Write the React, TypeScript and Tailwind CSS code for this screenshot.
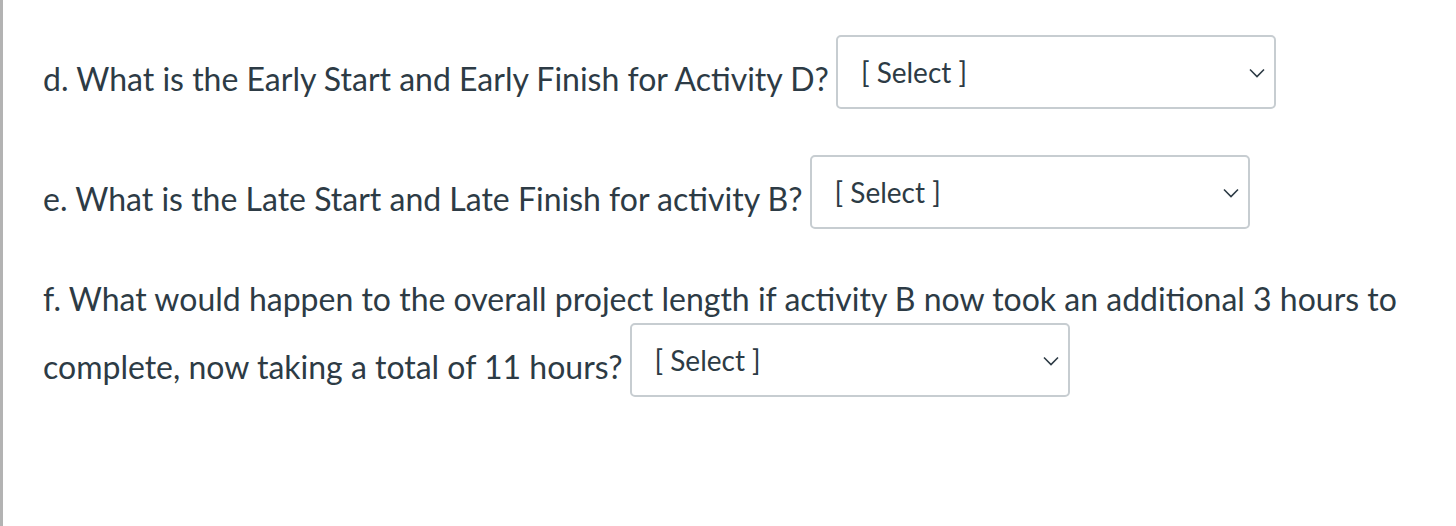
function SelectBox() {
  return (
    <div className="flex h-[74px] w-[440px] shrink-0 items-center justify-between rounded-[5px] border-2 border-[#c7cdd1] bg-white pl-[23px] pr-[9px]">
      <span className="text-[28px] text-[#2d3b45]">[ Select ]</span>
      <svg width="16" height="10" viewBox="0 0 16 10" fill="none" className="mt-[2px]">
        <polyline points="1,1.5 8,8.5 15,1.5" stroke="#2d3b45" strokeWidth="1.6" />
      </svg>
    </div>
  );
}

export default function App() {
  return (
    <div
      className="min-h-[526px] border-l-[3px] border-[#b3b3b3] bg-white pl-[40px] pt-[35px] text-[#2d3b45]"
      style={{ fontFamily: "Lato, 'Open Sans', sans-serif" }}
    >
      <div className="flex h-[74px] items-center gap-[7px] text-[32px]">
        <span className="mt-[14px]">d. What is the Early Start and Early Finish for Activity D?</span>
        <SelectBox />
      </div>

      <div className="mt-[46px] flex h-[74px] items-center gap-[7px] text-[32px]">
        <span className="mt-[14px]">e. What is the Late Start and Late Finish for activity B?</span>
        <SelectBox />
      </div>

      <div className="mt-[50px] text-[32px] leading-[40px]">
        f. What would happen to the overall project length if activity B now took an additional 3 hours to
      </div>
      <div className="mt-[4px] flex h-[74px] items-center gap-[7px] text-[32px]">
        <span className="mt-[14px]">complete, now taking a total of 11 hours?</span>
        <SelectBox />
      </div>
    </div>
  );
}
